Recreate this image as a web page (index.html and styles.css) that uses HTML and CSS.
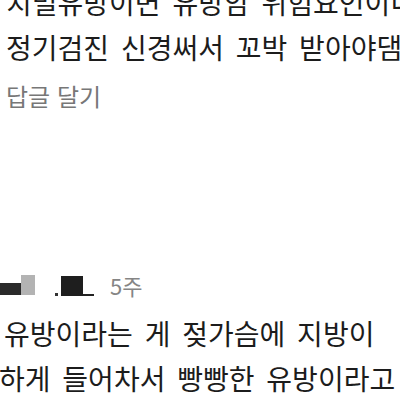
FILE: index.html
```html
<!DOCTYPE html>
<html lang="ko">
<head>
    <meta charset="UTF-8">
    <meta name="viewport" content="width=device-width, initial-scale=1.0">
    <title>댓글</title>
    <link rel="stylesheet" href="styles.css">
</head>
<body>
    <div class="thread">
        <div class="comment first">
            <p class="comment-text">치밀유방이면 유방암 위험요인이니<br>정기검진 신경써서 꼬박 받아야댐</p>
            <span class="reply">답글 달기</span>
        </div>

        <div class="comment second">
            <div class="comment-head">
                <span class="avatar"><span class="avatar-dark"></span><span class="avatar-light"></span></span>
                <span class="name"><span class="dot"></span><span class="blot"></span><span class="under"></span></span>
                <span class="time">5주</span>
            </div>
            <p class="comment-text">유방이라는 게 젖가슴에 지방이<br><span class="cut">하게 들어차서 빵빵한 유방이라고</span></p>
        </div>
    </div>
</body>
</html>
```

FILE: styles.css
```css
body {
    margin: 0;
    background-color: #fff;
    font-family: "Noto Sans CJK KR", "Noto Sans", sans-serif;
    color: #1c1c1c;
    overflow: hidden;
}
.thread {
    width: 400px;
    height: 400px;
    overflow: hidden;
}
.comment-text {
    margin: 0;
    font-size: 28px;
    line-height: 45px;
    word-spacing: 4px;
    white-space: nowrap;
}
.first {
    margin-top: -20px;
    padding-left: 6px;
}
.reply {
    display: block;
    margin-top: 9px;
    font-size: 24px;
    line-height: 34px;
    color: #777;
}
.second {
    margin-top: 157px;
    padding-left: 4px;
}
.second .comment-text {
    margin-top: 11px;
}
.comment-head {
    display: flex;
    align-items: center;
    height: 30px;
    margin-left: -4px;
}
.avatar {
    display: flex;
    align-items: flex-end;
    height: 20px;
}
.avatar-dark {
    width: 21px;
    height: 12px;
    background-color: #2a2a2a;
}
.avatar-light {
    width: 14px;
    height: 20px;
    background-color: #b3b3b3;
}
.name {
    display: flex;
    align-items: flex-end;
    height: 22px;
    margin-left: 20px;
}
.dot {
    width: 3px;
    height: 3px;
    background-color: #333;
    margin-right: 3px;
}
.blot {
    width: 22px;
    height: 20px;
    background-color: #1e1e1e;
}
.under {
    width: 11px;
    height: 2px;
    background-color: #222;
}
.time {
    margin-left: 16px;
    font-size: 22px;
    color: #858585;
}
.comment-text .cut {
    margin-left: -5px;
}
```
